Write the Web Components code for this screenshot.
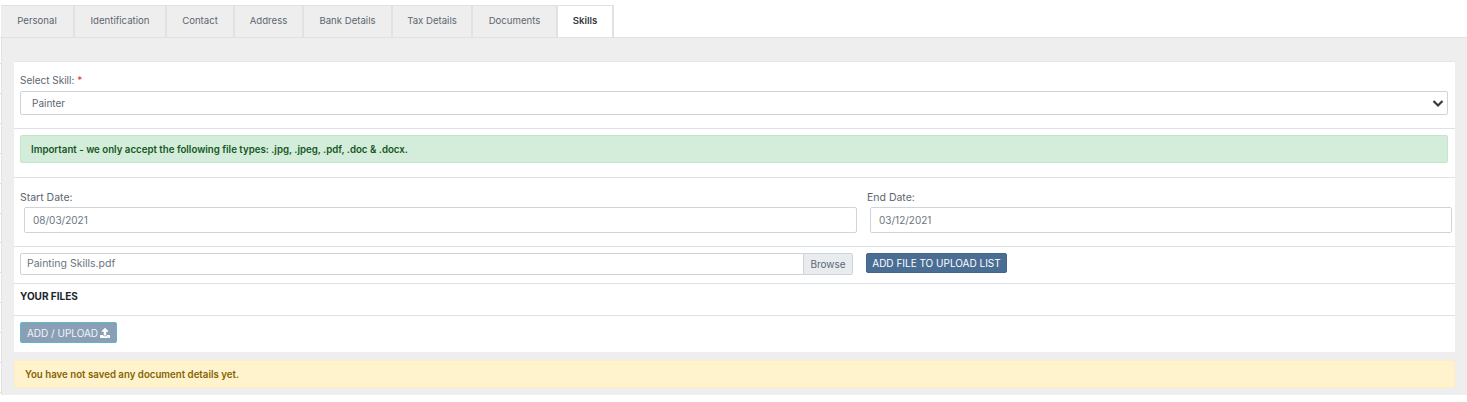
<!DOCTYPE html>
<html lang="en">
<head>
<meta charset="utf-8">
<title>Skills</title>
<style>
  html, body { margin: 0; background: #fff; }
  body { font-family: Inter, "Liberation Sans", sans-serif; font-size: 10px; color: #5c6670; }
</style>
</head>
<body>
<tab-bar>
  <tab-item w="74">Personal</tab-item>
  <tab-item w="92">Identification</tab-item>
  <tab-item w="68">Contact</tab-item>
  <tab-item w="69">Address</tab-item>
  <tab-item w="89">Bank Details</tab-item>
  <tab-item w="80">Tax Details</tab-item>
  <tab-item w="85">Documents</tab-item>
  <tab-item w="56" active>Skills</tab-item>
</tab-bar>
<tab-panel>
  <form-card>
    <form-row style="--pt:12px;--h:67px">
      <field-label req>Select Skill:</field-label>
      <select-box>Painter</select-box>
    </form-row>
    <form-row style="--pt:6px;--h:49px">
      <note-alert kind="ok" style="--mx:1px">Important - we only accept the following file types: .jpg, .jpeg, .pdf, .doc &amp; .docx.</note-alert>
    </form-row>
    <form-row style="--pt:14px;--h:69px">
      <date-pair>
        <date-field label="Start Date:" style="--w:837px;--ml:4px">08/03/2021</date-field>
        <date-field label="End Date:" style="--w:585px;--ml:3px">03/12/2021</date-field>
      </date-pair>
    </form-row>
    <form-row style="--pt:6px;--h:37px">
      <upload-line file="Painting Skills.pdf">ADD FILE TO UPLOAD LIST</upload-line>
    </form-row>
    <form-row style="--pt:6px;--h:32px"><b class="h">YOUR FILES</b></form-row>
    <form-row style="--pt:6px;--h:36px" last>
      <action-button>ADD / UPLOAD</action-button>
    </form-row>
  </form-card>
  <note-alert kind="warn">You have not saved any document details yet.</note-alert>
</tab-panel>

<script>
function defineEl(name, html, setup) {
  customElements.define(name, class extends HTMLElement {
    connectedCallback() {
      if (this.shadowRoot) return;
      this.attachShadow({ mode: 'open' }).innerHTML = html(this);
      if (setup) setup(this);
    }
  });
}

defineEl('tab-bar', () => `
  <style>:host { display: flex; padding: 5px 0 0 1px; height: 32px; box-sizing: content-box; }</style>
  <slot></slot>`);

defineEl('tab-item', () => `
  <style>
    :host { display: flex; align-items: center; justify-content: center; box-sizing: border-box;
      height: 32px; padding-bottom: 3px; background: #eee; border-top: 1px solid #e2e2e2; border-right: 2px solid #e2e2e2;
      white-space: nowrap; font-size: 9.6px; }
    :host([active]) { background: #fff; font-weight: 600; color: #343a40; }
  </style>
  <slot></slot>`, (el) => { el.style.width = el.getAttribute('w') + 'px'; });

// the first two pixel columns are the white gutter with its faint ticks, then the panel's lighter edge
defineEl('tab-panel', () => `
  <style>
    :host { display: block; box-sizing: border-box; height: 358px; border-top: 1px solid #e2e2e2; padding: 23px 12px 0 14px;
      background:
        repeating-linear-gradient(to bottom, transparent 0 25px, #ddd 25px 26px, transparent 26px 29.9px) 0 0 / 1px 100% no-repeat,
        linear-gradient(#fff, #fff) 0 0 / 1px 100% no-repeat,
        linear-gradient(#e2e2e2, #e2e2e2) 1px 0 / 1px 100% no-repeat,
        #eee; }
    ::slotted(note-alert) { margin-top: 8px; }
  </style>
  <slot></slot>`);

defineEl('form-card', () => `
  <style>:host { display: block; background: #fff; height: 291px; border-top: 1px solid #e4e6e8; box-sizing: border-box; }</style>
  <slot></slot>`);

defineEl('form-row', () => `
  <style>
    :host { display: block; box-sizing: border-box; height: var(--h); padding: var(--pt) 6px 0;
      border-bottom: 1px solid #dee2e6; }
    :host([last]) { border-bottom: 0; }
    ::slotted(.h) { display: block; font-weight: 700; color: #212529; font-size: 10px; line-height: 12px; }
  </style>
  <slot></slot>`);

defineEl('field-label', (el) => `
  <style>
    :host { display: block; line-height: 12px; margin-bottom: 5px; }
    i { color: #dc3545; font-style: normal; }
  </style>
  <slot></slot>${el.hasAttribute('req') ? ' <i>*</i>' : ''}`);

defineEl('select-box', () => `
  <style>
    :host { display: flex; align-items: center; justify-content: space-between; box-sizing: border-box;
      height: 24px; margin-right: 1px; padding: 0 3px 0 11px; background: #fff;
      border: 1px solid #ced4da; border-radius: 2px; }
    svg { display: block; }
  </style>
  <slot></slot>
  <svg width="12" height="10" viewBox="0 0 12 10"><path d="M1.5 3 L6 7.5 L10.5 3" fill="none" stroke="#343a40" stroke-width="2.2"/></svg>`);

defineEl('note-alert', (el) => {
  const c = el.getAttribute('kind') === 'ok'
    ? 'background:#d4edda;border:1px solid #c3e6cb;color:#155724'
    : 'background:#fff3cd;border:1px solid #ffeeba;color:#856404';
  return `
  <style>
    :host { display: block; }
    div { ${c}; box-sizing: border-box; border-radius: 2px; font-weight: 600; font-size: 9.7px;
      display: flex; align-items: center; height: 28px; padding: 0 10px; margin-right: var(--mx, 0); }
  </style>
  <div><span><slot></slot></span></div>`;
});

defineEl('date-pair', () => `
  <style>:host { display: flex; gap: 10px; }</style>
  <slot></slot>`);

defineEl('date-field', (el) => `
  <style>
    :host { display: block; width: var(--w); flex: none; }
    label { display: block; line-height: 12px; margin-bottom: 3px; font-size: 10.5px; }
    div { box-sizing: border-box; height: 26px; margin-left: var(--ml); padding: 0 8px; display: flex; align-items: center;
      border: 1px solid #ced4da; border-radius: 2px; color: #6c757d; }
  </style>
  <label>${el.getAttribute('label')}</label>
  <div><slot></slot></div>`);

defineEl('upload-line', (el) => `
  <style>
    :host { display: flex; align-items: flex-start; gap: 13px; }
    .file { display: flex; width: 833px; height: 22px; box-sizing: border-box; border: 1px solid #ced4da; border-radius: 2px; }
    .name { flex: 1; padding-left: 6px; line-height: 20px; color: #6c757d; font-size: 10.5px; }
    .browse { width: 48px; background: #e9ecef; border-left: 1px solid #ced4da; text-align: center; line-height: 20px; }
    button { font: inherit; height: 20px; width: 141px; padding: 0; color: #fff; background: #4a6d94;
      border: 1px solid #446589; border-radius: 2px; }
  </style>
  <div class="file"><span class="name">${el.getAttribute('file')}</span><span class="browse">Browse</span></div>
  <button><slot></slot></button>`);

defineEl('action-button', () => `
  <style>
    :host { display: inline-block; }
    button { font: inherit; display: flex; align-items: center; gap: 2px; justify-content: center; height: 21px; width: 97px; padding: 0;
      color: #f1f4f7; background: #8a9fb6; border: 1px solid #5fb6c9; border-radius: 2px; }
  </style>
  <button><slot></slot>
    <svg width="10" height="10" viewBox="0 0 512 512"><path fill="#fff" d="M296 384h-80c-13.3 0-24-10.7-24-24V192h-87.7c-17.8 0-26.7-21.5-14.1-34.1L242.3 5.7c7.5-7.5 19.8-7.5 27.3 0l152.2 152.2c12.6 12.6 3.7 34.1-14.1 34.1H320v168c0 13.3-10.7 24-24 24zm216-8v112c0 13.3-10.7 24-24 24H24c-13.3 0-24-10.7-24-24V376c0-13.3 10.7-24 24-24h136v8c0 30.9 25.1 56 56 56h80c30.9 0 56-25.1 56-56v-8h136c13.3 0 24 10.7 24 24zm-124 88c0-11-9-20-20-20s-20 9-20 20 9 20 20 20 20-9 20-20zm64 0c0-11-9-20-20-20s-20 9-20 20 9 20 20 20 20-9 20-20z"/></svg>
  </button>`);
</script>
</body>
</html>
